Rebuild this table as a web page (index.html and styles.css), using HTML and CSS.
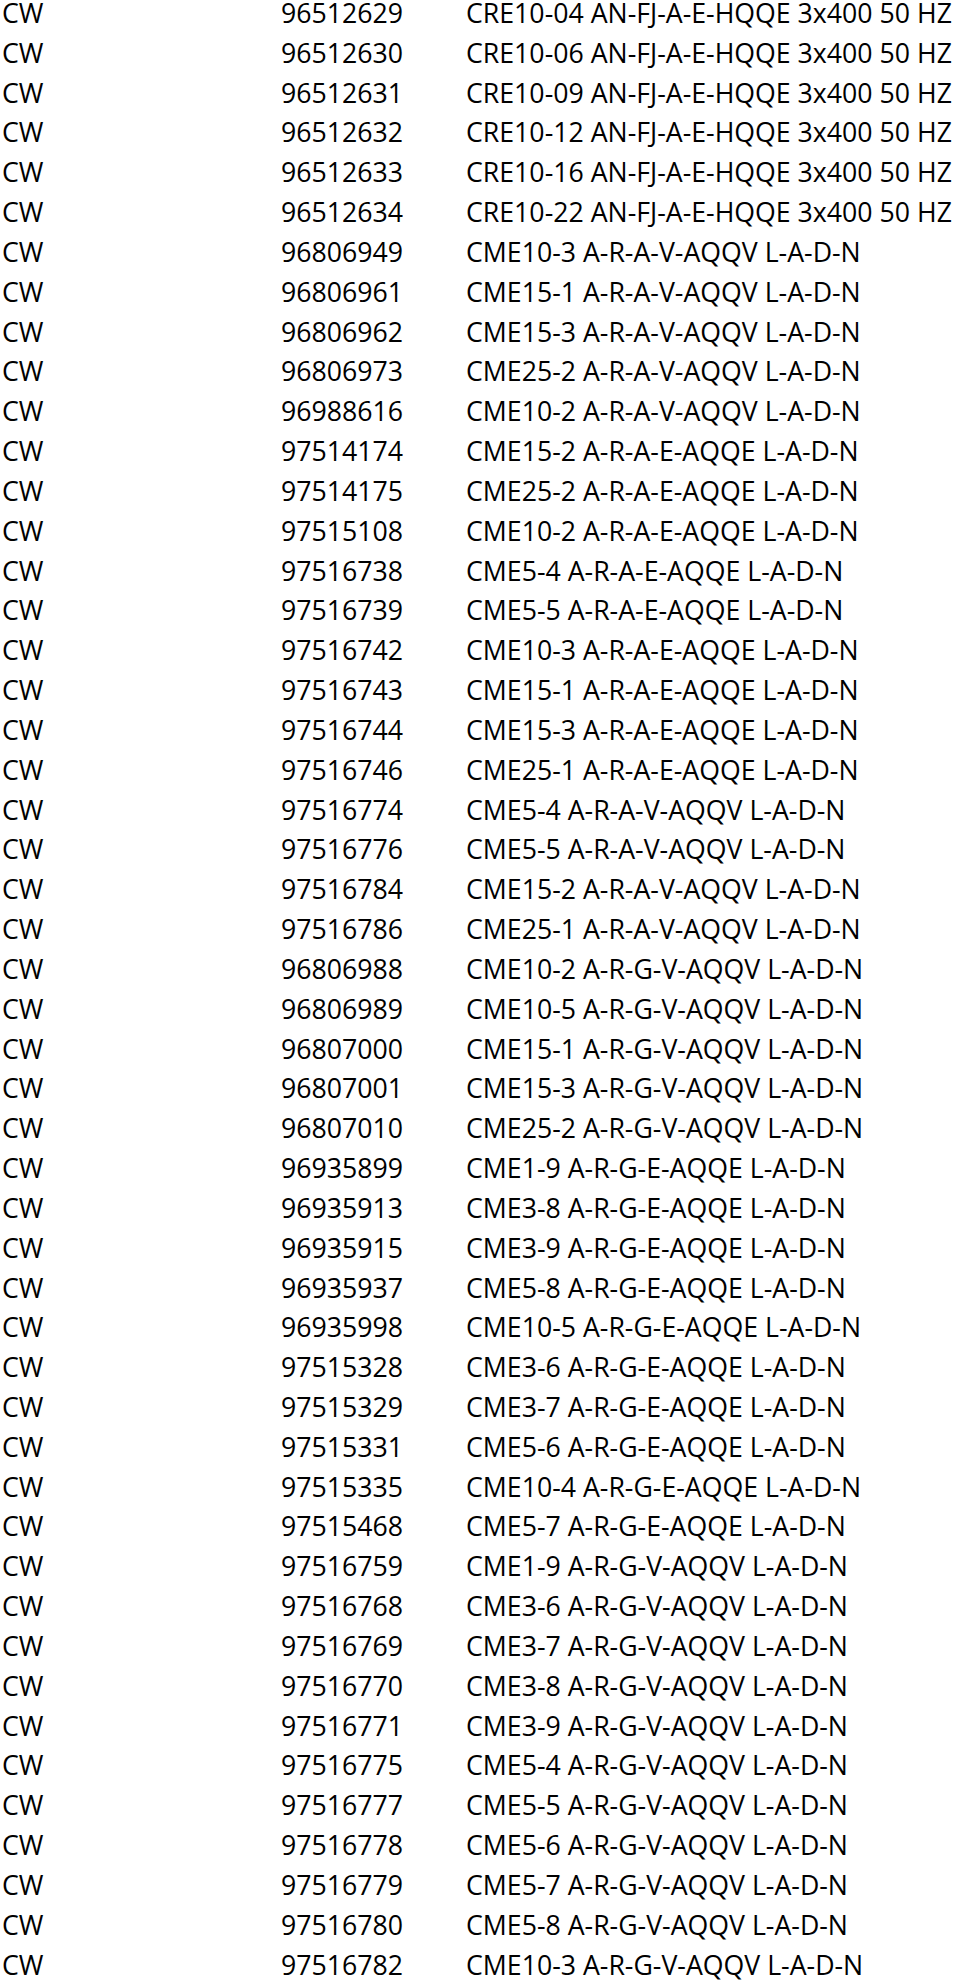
FILE: index.html
```html
<!DOCTYPE html>
<html lang="en">
<head>
<meta charset="utf-8">
<title>Product list</title>
<link rel="stylesheet" href="styles.css">
</head>
<body>
<div class="table">
<div class="row"><span class="c1">CW</span><span class="c2">96512629</span><span class="c3">CRE10-04 AN-FJ-A-E-HQQE 3x400 50 HZ</span></div>
<div class="row"><span class="c1">CW</span><span class="c2">96512630</span><span class="c3">CRE10-06 AN-FJ-A-E-HQQE 3x400 50 HZ</span></div>
<div class="row"><span class="c1">CW</span><span class="c2">96512631</span><span class="c3">CRE10-09 AN-FJ-A-E-HQQE 3x400 50 HZ</span></div>
<div class="row"><span class="c1">CW</span><span class="c2">96512632</span><span class="c3">CRE10-12 AN-FJ-A-E-HQQE 3x400 50 HZ</span></div>
<div class="row"><span class="c1">CW</span><span class="c2">96512633</span><span class="c3">CRE10-16 AN-FJ-A-E-HQQE 3x400 50 HZ</span></div>
<div class="row"><span class="c1">CW</span><span class="c2">96512634</span><span class="c3">CRE10-22 AN-FJ-A-E-HQQE 3x400 50 HZ</span></div>
<div class="row"><span class="c1">CW</span><span class="c2">96806949</span><span class="c3">CME10-3 A-R-A-V-AQQV L-A-D-N</span></div>
<div class="row"><span class="c1">CW</span><span class="c2">96806961</span><span class="c3">CME15-1 A-R-A-V-AQQV L-A-D-N</span></div>
<div class="row"><span class="c1">CW</span><span class="c2">96806962</span><span class="c3">CME15-3 A-R-A-V-AQQV L-A-D-N</span></div>
<div class="row"><span class="c1">CW</span><span class="c2">96806973</span><span class="c3">CME25-2 A-R-A-V-AQQV L-A-D-N</span></div>
<div class="row"><span class="c1">CW</span><span class="c2">96988616</span><span class="c3">CME10-2 A-R-A-V-AQQV L-A-D-N</span></div>
<div class="row"><span class="c1">CW</span><span class="c2">97514174</span><span class="c3">CME15-2 A-R-A-E-AQQE L-A-D-N</span></div>
<div class="row"><span class="c1">CW</span><span class="c2">97514175</span><span class="c3">CME25-2 A-R-A-E-AQQE L-A-D-N</span></div>
<div class="row"><span class="c1">CW</span><span class="c2">97515108</span><span class="c3">CME10-2 A-R-A-E-AQQE L-A-D-N</span></div>
<div class="row"><span class="c1">CW</span><span class="c2">97516738</span><span class="c3">CME5-4 A-R-A-E-AQQE L-A-D-N</span></div>
<div class="row"><span class="c1">CW</span><span class="c2">97516739</span><span class="c3">CME5-5 A-R-A-E-AQQE L-A-D-N</span></div>
<div class="row"><span class="c1">CW</span><span class="c2">97516742</span><span class="c3">CME10-3 A-R-A-E-AQQE L-A-D-N</span></div>
<div class="row"><span class="c1">CW</span><span class="c2">97516743</span><span class="c3">CME15-1 A-R-A-E-AQQE L-A-D-N</span></div>
<div class="row"><span class="c1">CW</span><span class="c2">97516744</span><span class="c3">CME15-3 A-R-A-E-AQQE L-A-D-N</span></div>
<div class="row"><span class="c1">CW</span><span class="c2">97516746</span><span class="c3">CME25-1 A-R-A-E-AQQE L-A-D-N</span></div>
<div class="row"><span class="c1">CW</span><span class="c2">97516774</span><span class="c3">CME5-4 A-R-A-V-AQQV L-A-D-N</span></div>
<div class="row"><span class="c1">CW</span><span class="c2">97516776</span><span class="c3">CME5-5 A-R-A-V-AQQV L-A-D-N</span></div>
<div class="row"><span class="c1">CW</span><span class="c2">97516784</span><span class="c3">CME15-2 A-R-A-V-AQQV L-A-D-N</span></div>
<div class="row"><span class="c1">CW</span><span class="c2">97516786</span><span class="c3">CME25-1 A-R-A-V-AQQV L-A-D-N</span></div>
<div class="row"><span class="c1">CW</span><span class="c2">96806988</span><span class="c3">CME10-2 A-R-G-V-AQQV L-A-D-N</span></div>
<div class="row"><span class="c1">CW</span><span class="c2">96806989</span><span class="c3">CME10-5 A-R-G-V-AQQV L-A-D-N</span></div>
<div class="row"><span class="c1">CW</span><span class="c2">96807000</span><span class="c3">CME15-1 A-R-G-V-AQQV L-A-D-N</span></div>
<div class="row"><span class="c1">CW</span><span class="c2">96807001</span><span class="c3">CME15-3 A-R-G-V-AQQV L-A-D-N</span></div>
<div class="row"><span class="c1">CW</span><span class="c2">96807010</span><span class="c3">CME25-2 A-R-G-V-AQQV L-A-D-N</span></div>
<div class="row"><span class="c1">CW</span><span class="c2">96935899</span><span class="c3">CME1-9 A-R-G-E-AQQE L-A-D-N</span></div>
<div class="row"><span class="c1">CW</span><span class="c2">96935913</span><span class="c3">CME3-8 A-R-G-E-AQQE L-A-D-N</span></div>
<div class="row"><span class="c1">CW</span><span class="c2">96935915</span><span class="c3">CME3-9 A-R-G-E-AQQE L-A-D-N</span></div>
<div class="row"><span class="c1">CW</span><span class="c2">96935937</span><span class="c3">CME5-8 A-R-G-E-AQQE L-A-D-N</span></div>
<div class="row"><span class="c1">CW</span><span class="c2">96935998</span><span class="c3">CME10-5 A-R-G-E-AQQE L-A-D-N</span></div>
<div class="row"><span class="c1">CW</span><span class="c2">97515328</span><span class="c3">CME3-6 A-R-G-E-AQQE L-A-D-N</span></div>
<div class="row"><span class="c1">CW</span><span class="c2">97515329</span><span class="c3">CME3-7 A-R-G-E-AQQE L-A-D-N</span></div>
<div class="row"><span class="c1">CW</span><span class="c2">97515331</span><span class="c3">CME5-6 A-R-G-E-AQQE L-A-D-N</span></div>
<div class="row"><span class="c1">CW</span><span class="c2">97515335</span><span class="c3">CME10-4 A-R-G-E-AQQE L-A-D-N</span></div>
<div class="row"><span class="c1">CW</span><span class="c2">97515468</span><span class="c3">CME5-7 A-R-G-E-AQQE L-A-D-N</span></div>
<div class="row"><span class="c1">CW</span><span class="c2">97516759</span><span class="c3">CME1-9 A-R-G-V-AQQV L-A-D-N</span></div>
<div class="row"><span class="c1">CW</span><span class="c2">97516768</span><span class="c3">CME3-6 A-R-G-V-AQQV L-A-D-N</span></div>
<div class="row"><span class="c1">CW</span><span class="c2">97516769</span><span class="c3">CME3-7 A-R-G-V-AQQV L-A-D-N</span></div>
<div class="row"><span class="c1">CW</span><span class="c2">97516770</span><span class="c3">CME3-8 A-R-G-V-AQQV L-A-D-N</span></div>
<div class="row"><span class="c1">CW</span><span class="c2">97516771</span><span class="c3">CME3-9 A-R-G-V-AQQV L-A-D-N</span></div>
<div class="row"><span class="c1">CW</span><span class="c2">97516775</span><span class="c3">CME5-4 A-R-G-V-AQQV L-A-D-N</span></div>
<div class="row"><span class="c1">CW</span><span class="c2">97516777</span><span class="c3">CME5-5 A-R-G-V-AQQV L-A-D-N</span></div>
<div class="row"><span class="c1">CW</span><span class="c2">97516778</span><span class="c3">CME5-6 A-R-G-V-AQQV L-A-D-N</span></div>
<div class="row"><span class="c1">CW</span><span class="c2">97516779</span><span class="c3">CME5-7 A-R-G-V-AQQV L-A-D-N</span></div>
<div class="row"><span class="c1">CW</span><span class="c2">97516780</span><span class="c3">CME5-8 A-R-G-V-AQQV L-A-D-N</span></div>
<div class="row"><span class="c1">CW</span><span class="c2">97516782</span><span class="c3">CME10-3 A-R-G-V-AQQV L-A-D-N</span></div>
</div>
</body>
</html>
```
FILE: styles.css
```css
html, body {
  margin: 0;
  padding: 0;
  background: #ffffff;
}
body {
  font-family: "Open Sans", "Liberation Sans", sans-serif;
  font-size: 26.7px;
  font-weight: 500;
  color: #000000;
}
.table {
  display: flex;
  flex-direction: column;
  padding-left: 2px;
}
.row {
  display: grid;
  grid-template-columns: 279px 185px 1fr;
  height: 39.83px;
  line-height: 25px;
  white-space: nowrap;
}
```
